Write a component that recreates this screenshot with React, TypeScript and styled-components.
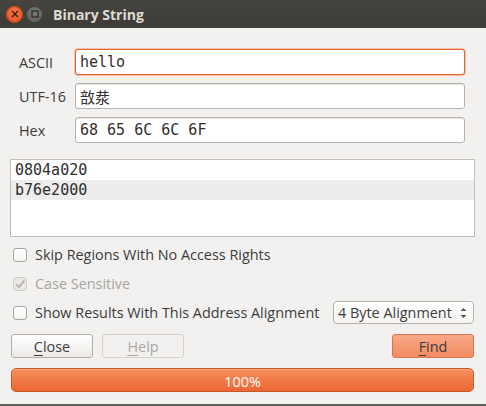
import React from 'react';
import styled, { createGlobalStyle } from 'styled-components';

const GlobalStyle = createGlobalStyle`
  html, body {
    margin: 0;
    padding: 0;
    background: #f2f1f0;
  }
  body {
    font-family: 'Open Sans', 'DejaVu Sans', sans-serif;
    font-size: 14.4px;
    color: #3c3c3c;
  }
`;

const mono = `'DejaVu Sans Mono', 'Noto Sans CJK SC', monospace`;

// Window frame
const Window = styled.div`
  width: 486px;
  height: 406px;
  background: #f2f1f0;
  display: flex;
  flex-direction: column;
  box-sizing: border-box;
  border-bottom: 2px solid #5f5e5a;
  overflow: hidden;
`;

const TitleBar = styled.div`
  height: 28px;
  flex: none;
  background: linear-gradient(#45443f, #3c3b37);
  display: flex;
  align-items: center;
  padding-left: 6px;
  gap: 3px;
`;

const WinButton = styled.div<{ $close?: boolean }>`
  width: 17px;
  height: 17px;
  border-radius: 50%;
  display: flex;
  align-items: center;
  justify-content: center;
  background: ${(p) =>
    p.$close
      ? 'radial-gradient(circle at 50% 35%, #f5764a, #df4b1c)'
      : 'radial-gradient(circle at 50% 35%, #7a7975, #5a5955)'};
  box-shadow: inset 0 0 0 1px ${(p) => (p.$close ? '#b83e14' : '#3f3e3a')};
`;

const Title = styled.div`
  margin-left: 7px;
  color: #dfdbd2;
  font-weight: 700;
  font-size: 14px;
`;

const Body = styled.div`
  display: flex;
  flex-direction: column;
  padding: 21px 12px 0 10px;
`;

// Form rows
const Form = styled.div`
  display: grid;
  grid-template-columns: 56px 390px;
  row-gap: 8px;
  margin-left: 9px;
  align-items: center;
`;

const Label = styled.div`
  font-size: 14.4px;
  color: #3c3c3c;
`;

const Field = styled.div<{ $focus?: boolean }>`
  height: 26px;
  box-sizing: border-box;
  background: #fff;
  border: 1px solid ${(p) => (p.$focus ? '#e9632f' : '#b6b2ab')};
  border-radius: 3px;
  box-shadow: ${(p) => (p.$focus ? '0 0 0 0.5px #f0916a' : 'inset 0 1px 0 #e8e6e3')};
  display: flex;
  align-items: center;
  padding-left: 4px;
  font-family: ${mono};
  font-size: 15px;
  color: #2f2f2f;
`;

const List = styled.div`
  margin-top: 16px;
  width: 465px;
  height: 78px;
  box-sizing: border-box;
  border: 1px solid #c1bdb7;
  background: #fff;
`;

const ListRow = styled.div<{ $alt?: boolean }>`
  height: 20px;
  display: flex;
  align-items: center;
  padding-left: 4px;
  font-family: ${mono};
  font-size: 15px;
  color: #2f2f2f;
  background: ${(p) => (p.$alt ? '#ededed' : '#fff')};
`;

// Checkbox rows
const CheckRow = styled.label<{ $disabled?: boolean; $h: number }>`
  height: ${(p) => p.$h}px;
  display: flex;
  align-items: center;
  gap: 8px;
  padding-left: 3px;
  color: ${(p) => (p.$disabled ? '#a6a49f' : '#3c3c3c')};
  font-size: 14.4px;
`;

const Box = styled.div<{ $disabled?: boolean }>`
  width: 14px;
  height: 14px;
  box-sizing: border-box;
  border: 1px solid ${(p) => (p.$disabled ? '#cfcbc5' : '#a8a49e')};
  border-radius: 3px;
  background: ${(p) => (p.$disabled ? '#ebeae8' : 'linear-gradient(#ffffff, #f4f3f2)')};
  display: flex;
  align-items: center;
  justify-content: center;
`;

const AlignRow = styled.div`
  display: flex;
  align-items: center;
  justify-content: space-between;
  height: 29px;
`;

const Combo = styled.div`
  width: 141px;
  height: 23px;
  box-sizing: border-box;
  border: 1px solid #b6b2ab;
  border-radius: 4px;
  background: linear-gradient(#ffffff, #f5f4f3);
  display: flex;
  align-items: center;
  justify-content: space-between;
  padding: 0 6px 0 4px;
  font-size: 14.4px;
  color: #3c3c3c;
`;

// Buttons
const ButtonRow = styled.div`
  margin-top: 7px;
  display: flex;
  align-items: center;
  padding-left: 1px;
`;

const Button = styled.div<{ $variant?: 'primary' | 'disabled' }>`
  width: 82px;
  height: 24px;
  box-sizing: border-box;
  border-radius: 3px;
  display: flex;
  align-items: center;
  justify-content: center;
  font-size: 14.4px;
  border: 1px solid
    ${(p) =>
      p.$variant === 'primary' ? '#d9764f' : p.$variant === 'disabled' ? '#d6d3ce' : '#b3afa8'};
  background: ${(p) =>
    p.$variant === 'primary'
      ? 'linear-gradient(#f9a986, #f28b62)'
      : p.$variant === 'disabled'
      ? '#f2f1f0'
      : 'linear-gradient(#ffffff, #eceae8)'};
  color: ${(p) => (p.$variant === 'disabled' ? '#a9a7a3' : '#3c3c3c')};
`;

const Spacer = styled.div`
  flex: 1;
`;

const U = styled.span`
  text-decoration: underline;
  text-underline-offset: 3px;
`;

const Progress = styled.div`
  margin-top: 10px;
  margin-left: 1px;
  width: 463px;
  height: 24px;
  box-sizing: border-box;
  border: 1px solid #c85a2a;
  border-radius: 5px;
  background: linear-gradient(#f8905f, #ea6632);
  box-shadow: inset 0 1px 0 #fba57d;
  display: flex;
  align-items: center;
  justify-content: center;
  padding-top: 2px;
  color: #ffffff;
  font-size: 14.4px;
`;

const Check = ({ disabled }: { disabled?: boolean }) => (
  <Box $disabled={disabled}>
    {disabled && (
      <svg width="12" height="12" viewBox="0 0 12 12">
        <path d="M2 6.2 L5 9 L10.5 2.5" fill="none" stroke="#b9b7b3" strokeWidth="2" />
      </svg>
    )}
  </Box>
);

export default function App() {
  return (
    <>
      <GlobalStyle />
      <Window>
        <TitleBar>
          <WinButton $close>
            <svg width="8" height="8" viewBox="0 0 8 8">
              <path d="M1 1 L7 7 M7 1 L1 7" stroke="#3a1a0c" strokeWidth="1.3" />
            </svg>
          </WinButton>
          <WinButton>
            <svg width="8" height="8" viewBox="0 0 8 8">
              <rect x="1" y="1" width="6" height="6" fill="none" stroke="#2e2d2a" strokeWidth="1.3" />
            </svg>
          </WinButton>
          <Title>Binary String</Title>
        </TitleBar>
        <Body>
          <Form>
            <Label>ASCII</Label>
            <Field $focus>hello</Field>
            <Label>UTF-16</Label>
            <Field>敨汬</Field>
            <Label>Hex</Label>
            <Field>68 65 6C 6C 6F</Field>
          </Form>
          <List>
            <ListRow>0804a020</ListRow>
            <ListRow $alt>b76e2000</ListRow>
          </List>
          <div style={{ height: 3 }} />
          <CheckRow $h={29}>
            <Check />
            Skip Regions With No Access Rights
          </CheckRow>
          <CheckRow $h={29} $disabled>
            <Check disabled />
            Case Sensitive
          </CheckRow>
          <AlignRow>
            <CheckRow $h={29}>
              <Check />
              Show Results With This Address Alignment
            </CheckRow>
            <Combo>
              4 Byte Alignment
              <svg width="7" height="12" viewBox="0 0 7 12">
                <path d="M0.5 4 L3.5 1 L6.5 4 Z M0.5 8 L3.5 11 L6.5 8 Z" fill="#555" />
              </svg>
            </Combo>
          </AlignRow>
          <ButtonRow>
            <Button>
              <U>C</U>lose
            </Button>
            <div style={{ width: 9 }} />
            <Button $variant="disabled">
              <U>H</U>elp
            </Button>
            <Spacer />
            <Button $variant="primary">
              <U>F</U>ind
            </Button>
          </ButtonRow>
          <Progress>100%</Progress>
        </Body>
      </Window>
    </>
  );
}
